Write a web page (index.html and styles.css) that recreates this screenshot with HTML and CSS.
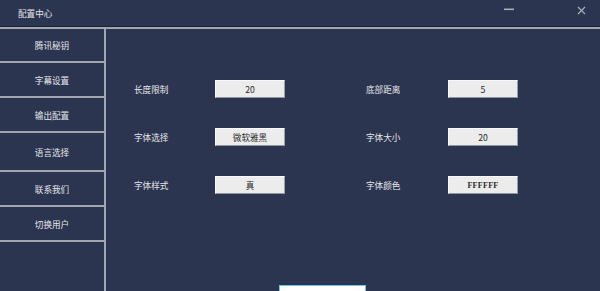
FILE: index.html
```html
<!DOCTYPE html>
<html lang="zh-CN">
<head>
<meta charset="utf-8">
<title>配置中心</title>
<link rel="stylesheet" href="styles.css">
</head>
<body>
<div class="window">
  <header class="titlebar">
    <span class="title">配置中心</span>
    <div class="controls">
      <span class="ctl min" aria-label="最小化"><svg width="10" height="3" viewBox="0 0 10 3"><rect x="0" y="0.5" width="10" height="1.6" fill="#a9aebb"/></svg></span>
      <span class="ctl close" aria-label="关闭"><svg width="9" height="9" viewBox="0 0 9 9"><path d="M1 1L8 8M8 1L1 8" stroke="#a9aebb" stroke-width="1.2" fill="none"/></svg></span>
    </div>
  </header>
  <div class="body">
    <nav class="sidebar">
      <div class="nav-item h32">腾讯秘钥</div>
      <div class="nav-item h33">字幕设置</div>
      <div class="nav-item h33">输出配置</div>
      <div class="nav-item h37">语言选择</div>
      <div class="nav-item h33">联系我们</div>
      <div class="nav-item h33">切换用户</div>
    </nav>
    <main class="content">
      <div class="form">
        <span class="label">长度限制</span><span class="field">20</span>
        <span class="label">底部距离</span><span class="field">5</span>
        <span class="label">字体选择</span><span class="field">微软雅黑</span>
        <span class="label">字体大小</span><span class="field">20</span>
        <span class="label">字体样式</span><span class="field">真</span>
        <span class="label">字体颜色</span><span class="field mono">FFFFFF</span>
      </div>
      <div class="save-btn"></div>
    </main>
  </div>
</div>
</body>
</html>
```
FILE: styles.css
```css
html, body {
  margin: 0;
  padding: 0;
  width: 600px;
  height: 291px;
  overflow: hidden;
  background: #2c3550;
}
.window {
  width: 600px;
  height: 291px;
  font-family: "Noto Sans CJK SC", "Noto Sans", sans-serif;
  font-size: 8.6px;
  color: #e4e6eb;
  display: flex;
  flex-direction: column;
  overflow: hidden;
}
.titlebar {
  height: 27px;
  box-sizing: border-box;
  border-bottom: 1px solid #1d2335;
  display: flex;
  align-items: center;
  padding-left: 18px;
  flex: none;
}
.title {
  margin-top: -1px;
}
.controls {
  margin-left: auto;
  display: flex;
  align-items: center;
}
.ctl {
  display: flex;
  align-items: center;
  justify-content: center;
}
.min {
  width: 10px;
  margin-right: 63px;
  margin-top: -7px;
}
.close {
  width: 9px;
  margin-right: 14px;
  margin-top: -5px;
}
.body {
  flex: 1;
  display: flex;
  border-top: 2px solid #a2a6b0;
  min-height: 0;
}
.sidebar {
  width: 104px;
  border-right: 2px solid #a2a6b0;
  flex: none;
}
.nav-item {
  border-bottom: 2px solid #a2a6b0;
  display: flex;
  align-items: center;
  justify-content: center;
  box-sizing: content-box;
}
.h32 { height: 32px; }
.h33 { height: 33px; }
.h37 { height: 37px; }
.content {
  flex: 1;
  padding: 51px 0 0 28px;
  overflow: hidden;
}
.form {
  display: grid;
  grid-template-columns: 81px 151px 82px 70px;
  grid-auto-rows: 18px;
  row-gap: 30px;
  align-items: center;
}
.label {
  line-height: 18px;
}
.field {
  width: 70px;
  height: 18px;
  box-sizing: border-box;
  background: #ececec;
  border: 1px solid;
  border-color: #f8f8f8 #9aa0ab #8e94a0 #f8f8f8;
  color: #2a2a2a;
  display: flex;
  align-items: center;
  justify-content: center;
}
.mono {
  font-family: "Liberation Serif", serif;
  font-weight: bold;
  font-size: 8px;
  letter-spacing: 0.3px;
}
.save-btn {
  margin: 91px 0 0 145px;
  width: 87px;
  height: 30px;
  box-sizing: border-box;
  background: #ffffff;
  border: 1px solid #6fc6ec;
}
```
